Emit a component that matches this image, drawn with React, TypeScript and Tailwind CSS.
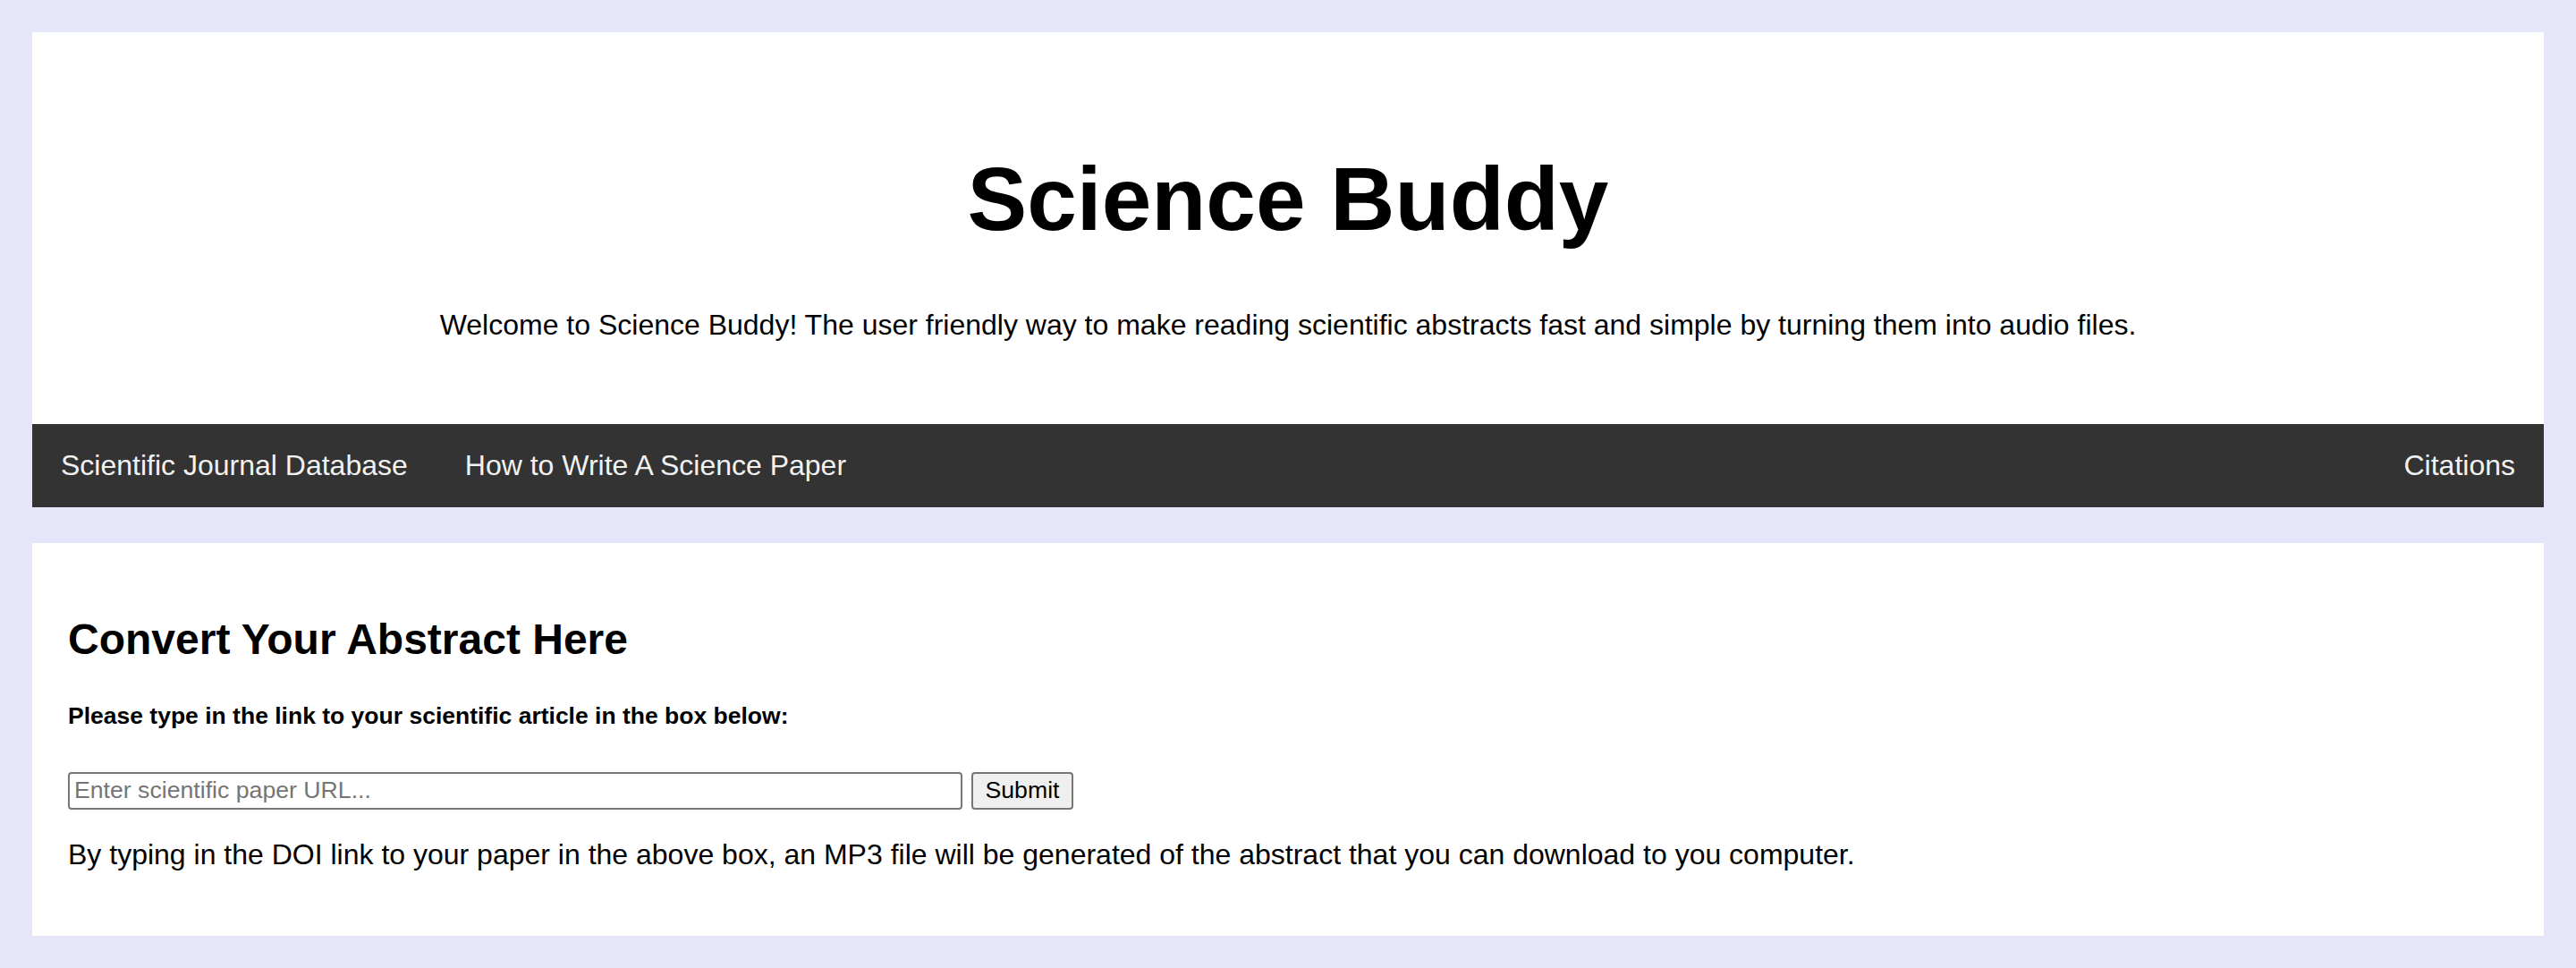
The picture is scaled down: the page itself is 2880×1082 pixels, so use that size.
import { useState } from "react"

const navLinks = ["Scientific Journal Database", "How to Write A Science Paper"]

export default function App() {
  const [url, setUrl] = useState("")

  return (
    <div
      className="min-h-screen bg-[#e6e6fa] p-[36px] text-black"
      style={{ fontFamily: '"Liberation Sans", Arial, sans-serif' }}
    >
      {/* Header */}
      <header className="bg-white pt-[136px] pb-[95px] text-center">
        <h1 className="text-[100px] leading-none font-bold">Science Buddy</h1>
        <p className="mt-[75px] text-[32px] leading-none">
          Welcome to Science Buddy! The user friendly way to make reading scientific abstracts fast and simple by
          turning them into audio files.
        </p>
      </header>

      {/* Nav */}
      <nav className="flex bg-[#333333] text-[#f2f2f2]">
        {navLinks.map((link) => (
          <a key={link} href="#" className="block px-[32px] pt-[27px] pb-[28px] text-[32px] leading-[38px]">
            {link}
          </a>
        ))}
        <a href="#" className="ml-auto block px-[32px] pt-[27px] pb-[28px] text-[32px] leading-[38px]">
          Citations
        </a>
      </nav>

      {/* Converter */}
      <main className="mt-[40px] bg-white px-[40px] pt-[84px] pb-[75px]">
        <h2 className="text-[48px] leading-none font-bold">Convert Your Abstract Here</h2>
        <h5 className="mt-[48px] text-[26.5px] leading-none font-bold">
          Please type in the link to your scientific article in the box below:
        </h5>

        <form className="mt-[49px] flex h-[42px] gap-[10px]" onSubmit={(e) => e.preventDefault()}>
          <input
            type="text"
            value={url}
            onChange={(e) => setUrl(e.target.value)}
            placeholder="Enter scientific paper URL..."
            className="h-[42px] w-[1000px] rounded-[4px] border-2 border-[#767676] bg-white px-[5px] text-[26.67px] leading-none placeholder:text-[#757575] outline-none"
          />
          <button
            type="submit"
            className="h-[42px] w-[114px] rounded-[4px] border-2 border-[#767676] bg-[#efefef] text-[26.67px] leading-none"
          >
            Submit
          </button>
        </form>

        <p className="mt-[34px] text-[32px] leading-none">
          By typing in the DOI link to your paper in the above box, an MP3 file will be generated of the abstract that
          you can download to you computer.
        </p>
      </main>
    </div>
  )
}
